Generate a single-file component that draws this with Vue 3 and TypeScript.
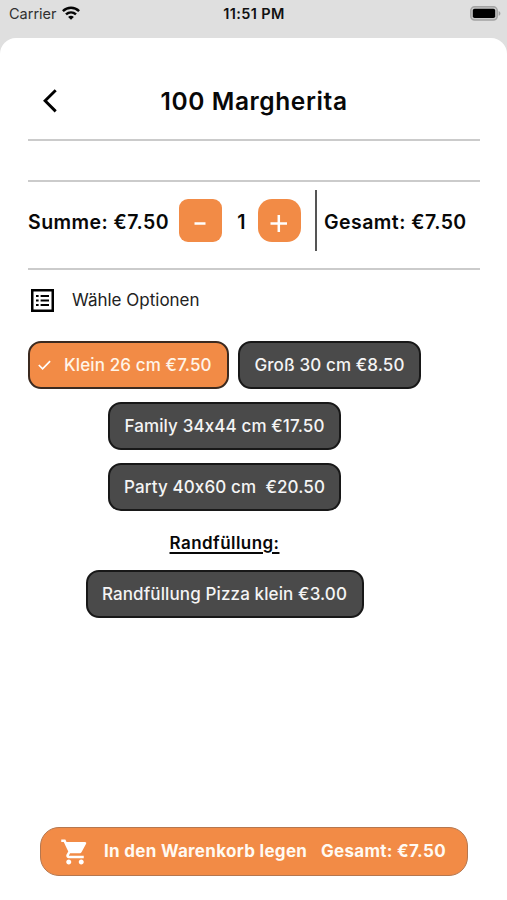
<script setup lang="ts">
import { computed, ref } from 'vue'

interface Option {
  id: string
  label: string
  price: number
}

const sizes: Option[] = [
  { id: 'klein', label: 'Klein 26 cm ', price: 7.5 },
  { id: 'gross', label: 'Groß 30 cm ', price: 8.5 },
  { id: 'family', label: 'Family 34x44 cm ', price: 17.5 },
  { id: 'party', label: 'Party 40x60 cm  ', price: 20.5 },
]
const crust: Option = { id: 'rand', label: 'Randfüllung Pizza klein ', price: 3 }

const selected = ref('klein')
const withCrust = ref(false)
const quantity = ref(1)

const euro = (value: number): string => `€${value.toFixed(2)}`
const sum = computed(
  () => (sizes.find((s) => s.id === selected.value)?.price ?? 0) + (withCrust.value ? crust.price : 0),
)
const total = computed(() => sum.value * quantity.value)
</script>

<template>
  <div class="screen">
    <header class="status">
      <div class="carrier">
        <span>Carrier</span>
        <svg class="wifi" viewBox="0 0 18 14" width="18" height="14">
          <g fill="none" stroke="#050505" stroke-width="2.5">
            <path d="M.9 5.1C5.5.7 12.500.7 17.100 5.100" />
            <path d="M4 8.400c2.900-2.700 7.100-2.700 10 0" />
          </g>
          <path d="M9 13.700 6.100 10.900c1.700-1.500 4.100-1.500 5.800 0z" fill="#050505" />
        </svg>
      </div>
      <span class="clock">11:51 PM</span>
      <svg class="battery" viewBox="0 0 31 15" width="31" height="15">
        <rect x=".8" y=".8" width="26.400" height="13.200" rx="3.800" fill="#c8c8c8" stroke="#a3a3a3" stroke-width="1.500" />
        <rect x="2.800" y="2.800" width="22.400" height="9.200" rx="1.800" fill="#000" />
        <path d="M28.600 5c2.400.8 2.400 4 0 4.800z" fill="#a0a0a0" />
      </svg>
    </header>

    <main class="sheet">
      <div class="titlebar">
        <button class="back" aria-label="Zurück">
          <svg viewBox="0 0 16 24" width="16" height="24">
            <path d="M13.700 1.200 3.100 11.800l10.600 10.600" fill="none" stroke="#000" stroke-width="2.900" />
          </svg>
        </button>
        <h1>100 Margherita</h1>
      </div>

      <div class="spacer"></div>

      <section class="amount">
        <span class="figure sum">Summe: {{ euro(sum) }}</span>
        <button class="step minus" aria-label="Weniger" @click="quantity = Math.max(1, quantity - 1)">
          <svg viewBox="0 0 43 43" width="43" height="43"><path d="M15.500 24.500h11" stroke="#fff" stroke-width="2.500" /></svg>
        </button>
        <span class="figure count">{{ quantity }}</span>
        <button class="step plus" aria-label="Mehr" @click="quantity++">
          <svg viewBox="0 0 43 43" width="43" height="43"><path d="M12.500 24.500h16.500M20.800 16v17" stroke="#fff" stroke-width="2.500" /></svg>
        </button>
        <i class="divider"></i>
        <span class="figure total">Gesamt: {{ euro(total) }}</span>
      </section>

      <div class="heading">
        <svg viewBox="0 0 23 23" width="23" height="23">
          <rect x="1.250" y="1.250" width="20.500" height="20.500" fill="none" stroke="#000" stroke-width="2.500" />
          <path d="M5 7h2.600M5 11.500h2.600M5 16h2.600M9.600 7h8.400M9.600 11.500h8.400M9.600 16h8.400" stroke="#000" stroke-width="2.100" />
        </svg>
        <span>Wähle Optionen</span>
      </div>

      <section class="options">
        <button
          v-for="size in sizes"
          :key="size.id"
          class="chip"
          :class="[size.id, { active: selected === size.id }]"
          @click="selected = size.id"
        >
          <svg v-if="selected === size.id" class="check" viewBox="0 0 13 10" width="13" height="10">
            <path d="m.8 5 3.800 3.800L12.100 1.200" fill="none" stroke="#fff" stroke-width="1.700" />
          </svg>
          <span>{{ size.label }}{{ euro(size.price) }}</span>
        </button>
        <h2><span>Randfüllung:</span></h2>
        <button class="chip rand" :class="{ active: withCrust }" @click="withCrust = !withCrust">
          <span>{{ crust.label }}{{ euro(crust.price) }}</span>
        </button>
      </section>

      <button class="cart">
        <svg viewBox="0 0 24 24" width="30" height="30">
          <path fill="#fff" d="M7 18c-1.100 0-1.990.9-1.990 2S5.900 22 7 22s2-.9 2-2-.9-2-2-2zM1 2v2h2l3.600 7.590-1.350 2.450c-.16.280-.25.610-.25.960 0 1.100.9 2 2 2h12v-2H7.420c-.14 0-.25-.11-.25-.25l.03-.12.9-1.630h7.450c.75 0 1.410-.41 1.750-1.030l3.580-6.490A1 1 0 0 0 20 4H5.210l-.94-2H1zm16 16c-1.100 0-1.990.9-1.990 2s.89 2 1.990 2 2-.9 2-2-.9-2-2-2z" />
        </svg>
        <span class="add">In den Warenkorb legen</span>
        <span class="pay">Gesamt: {{ euro(total) }}</span>
      </button>
    </main>
  </div>
</template>

<style>
body {
  margin: 0;
  background: #dfdfdf;
}
</style>

<style scoped>
.screen {
  width: 507px;
  height: 900px;
  display: flex;
  flex-direction: column;
  overflow: hidden;
  background: #dfdfdf;
  color: #080808;
  font-family: Inter, "Liberation Sans", sans-serif;
  font-feature-settings: "calt" 0;
}
button {
  margin: 0;
  padding: 0;
  border: 0;
  background: none;
  font: inherit;
  font-feature-settings: inherit;
  color: inherit;
  box-sizing: border-box;
}
svg {
  display: block;
  flex: none;
}
span,
h1,
h2 {
  white-space: pre;
}
.status {
  height: 38px;
  flex: none;
  display: grid;
  grid-template-columns: 1fr auto 1fr;
  box-sizing: border-box;
  padding: 5px 6px 0 9px;
  align-items: start;
  font-size: 14.5px;
  line-height: 18px;
}
.carrier {
  display: flex;
  gap: 6px;
  color: #303030;
}
.wifi {
  margin: 1px 0 0 -1px;
}
.clock {
  font-size: 14.5px;
  font-weight: 600;
  letter-spacing: 0.4px;
  margin-left: -2px;
  color: #111;
}
.battery {
  justify-self: end;
  margin-top: 1px;
}
.sheet {
  flex: 1;
  box-sizing: border-box;
  padding: 0 27px 24px 28px;
  display: flex;
  flex-direction: column;
  border-radius: 16px 16px 0 0;
  background: #fff;
}
.titlebar {
  height: 103px;
  flex: none;
  box-sizing: border-box;
  display: grid;
  grid-template-columns: 40px 1fr 40px;
  align-items: center;
  padding-top: 24px;
  border-bottom: 2px solid #cbcbcb;
}
.back {
  justify-self: start;
  padding-left: 14px;
}
h1 {
  margin: 0;
  text-align: center;
  font-size: 24.5px;
  line-height: 30px;
  font-weight: 600;
  letter-spacing: 0.6px;
}
.spacer {
  height: 41px;
  flex: none;
  box-sizing: border-box;
  border-bottom: 2px solid #cbcbcb;
}
.amount {
  height: 88px;
  flex: none;
  box-sizing: border-box;
  padding-bottom: 9px;
  display: flex;
  align-items: center;
  border-bottom: 2px solid #cbcbcb;
}
.figure {
  padding-top: 2px;
  font-size: 19.5px;
  font-weight: 600;
  letter-spacing: 0.45px;
}
.sum {
  width: 151px;
}
.step {
  width: 43px;
  height: 43px;
  background: #f28b46;
}
.minus {
  border-radius: 9px;
}
.plus {
  border-radius: 14px;
}
.count {
  width: 36px;
  text-align: center;
  text-indent: 3px;
}
.divider {
  width: 2px;
  height: 61px;
  margin: 0 7px 0 14px;
  background: #555;
}
.heading {
  height: 59px;
  flex: none;
  display: flex;
  align-items: center;
  gap: 18px;
  padding: 1px 0 0 3px;
  font-size: 17px;
  color: #222;
}
.heading span {
  margin-top: -2px;
}
.options {
  width: 393px;
  margin-top: 11px;
  display: flex;
  flex-wrap: wrap;
  justify-content: center;
  gap: 13px 9px;
}
.chip {
  height: 48px;
  display: flex;
  align-items: center;
  justify-content: center;
  border: 2px solid #181818;
  border-radius: 13px;
  background: #4a4a4a;
  color: #f4f4f4;
  font-size: 17px;
  font-weight: 500;
  letter-spacing: 0.12px;
}
.chip.active {
  border-color: #3b2a20;
  background: #f28b46;
  color: #fff4e8;
}
.klein {
  width: 201px;
  justify-content: flex-start;
  padding-left: 8px;
}
.check {
  margin-right: 13px;
}
.gross {
  width: 183px;
}
.family,
.party {
  width: 233px;
}
.rand {
  width: 278px;
}
h2 {
  width: 100%;
  height: 33px;
  margin: 0;
  line-height: 39px;
  text-align: center;
  font-size: 17px;
  font-weight: 600;
  letter-spacing: 0.45px;
  text-decoration: underline;
  text-underline-offset: 3px;
  text-decoration-thickness: 1.5px;
}
.cart {
  width: 428px;
  height: 49px;
  margin: auto 0 0 12px;
  padding-left: 19px;
  display: flex;
  align-items: center;
  border: 1px solid #b5774f;
  border-radius: 19px;
  background: #f28b46;
  color: #fffaf2;
  font-size: 17px;
  font-weight: 700;
  letter-spacing: 0.3px;
}
.cart span {
  margin-top: -1px;
}
.add {
  margin-left: 14px;
  width: 217px;
  text-align: left;
}
</style>
